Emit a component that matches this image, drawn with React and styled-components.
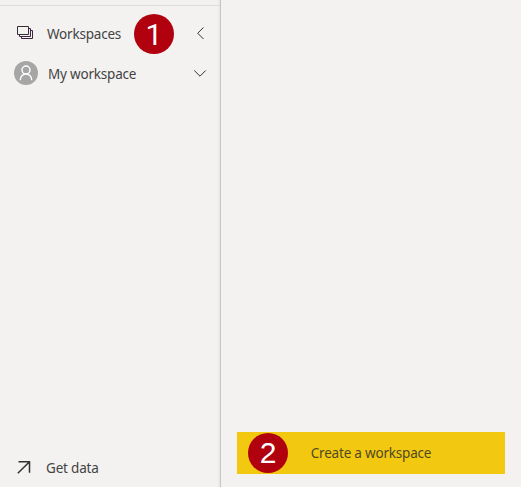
import React from "react";
import styled, { createGlobalStyle } from "styled-components";

const GlobalStyle = createGlobalStyle`
  * { box-sizing: border-box; }
  body {
    margin: 0;
    background: #f3f2f1;
    color: #444342;
    font-family: "Noto Sans", "Open Sans", sans-serif;
    font-size: 13.5px;
  }
`;

const Page = styled.div`
  display: flex;
  height: 487px;
  width: 521px;
  overflow: hidden;
`;

const Sidebar = styled.nav`
  display: flex;
  flex-direction: column;
  width: 221px;
  padding-top: 5px;
  border-right: 1px solid #c6c5c4;
  box-shadow: inset -3px 0 3px -2px rgba(0, 0, 0, 0.06);
`;

const NavList = styled.div`
  flex: 1;
  padding-top: 8px;
  border-top: 1px solid #dddcdb;
`;

const NavRow = styled.div`
  position: relative;
  display: flex;
  align-items: center;
  height: 40px;
  padding-left: ${(p) => p.$inset}px;
  padding-right: ${(p) => p.$end || 0}px;
`;

const Label = styled.span`
  margin-left: ${(p) => p.$gap || 0}px;
  line-height: 20px;
  letter-spacing: -0.2px;
  white-space: nowrap;
`;

const Icon = styled.svg`
  flex: none;
  display: block;
  fill: none;
  stroke: #323130;
  margin-left: ${(p) => (p.$push ? "auto" : 0)};
`;

const Badge = styled.span`
  position: absolute;
  left: ${(p) => p.$left}px;
  top: ${(p) => p.$top}px;
  display: flex;
  align-items: center;
  justify-content: center;
  width: 40px;
  height: 40px;
  padding-top: ${(p) => p.$drop || 0}px;
  border-radius: 50%;
  background: #b1000e;
  color: #fff;
  font: 400 30px/38px ${(p) => p.$face || '"Liberation Sans"'}, Arial, sans-serif;
`;

const Footer = styled.div`
  height: 39px;
`;

const Panel = styled.main`
  flex: 1;
  display: flex;
  align-items: flex-end;
  padding: 0 16px 13px;
`;

const CreateButton = styled.button`
  position: relative;
  width: 100%;
  height: 42px;
  padding: 0;
  border: 0;
  background: #f2c811;
  color: #4f4a22;
  font: inherit;
`;

export default function App() {
  return (
    <>
      <GlobalStyle />
      <Page>
        <Sidebar>
          <NavList>
            <NavRow $inset={17} $end={14}>
              <Icon width="17" height="16" viewBox="0 0 17 16">
                <path d="M.5 .5h11v8H.5z" />
                <path d="M2.5 8.5v2h11v-8h-2M4.5 10.5v2h11v-8h-2" stroke="#3d2444" />
              </Icon>
              <Label $gap={13}>Workspaces</Label>
              <Badge $left={134} $top={0} $face="Roboto" $drop={2}>1</Badge>
              <Icon $push width="10" height="14" viewBox="0 0 10 14">
                <path d="M7.5 0.5 1.7 6.2l5.8 5.8" />
              </Icon>
            </NavRow>
            <NavRow $inset={14} $end={13}>
              <Icon width="24" height="26" viewBox="0 0 24 26">
                <circle cx="12" cy="12" r="12" fill="#a6a6a6" stroke="none" />
                <circle cx="12" cy="9" r="4" stroke="#fff" strokeWidth="1.4" />
                <path d="M6.2 19.2c0-3.7 2.6-6.2 5.8-6.2s5.8 2.5 5.8 6.2" stroke="#fff" strokeWidth="1.4" />
              </Icon>
              <Label $gap={10}>My workspace</Label>
              <Icon $push width="14" height="10" viewBox="0 0 14 10">
                <path d="m1.3 1.5 5.7 5.7 5.7-5.7" />
              </Icon>
            </NavRow>
          </NavList>
          <Footer>
            <NavRow $inset={17}>
              <Icon width="14" height="16" viewBox="0 0 14 16" strokeWidth="1.5">
                <path d="M1.5 1.7h11v11M12.5 1.7.8 13.2" />
              </Icon>
              <Label $gap={15}>Get data</Label>
            </NavRow>
          </Footer>
        </Sidebar>
        <Panel>
          <CreateButton>
            <Badge $left={11} $top={1}>2</Badge>
            <Label>Create a workspace</Label>
          </CreateButton>
        </Panel>
      </Page>
    </>
  );
}
